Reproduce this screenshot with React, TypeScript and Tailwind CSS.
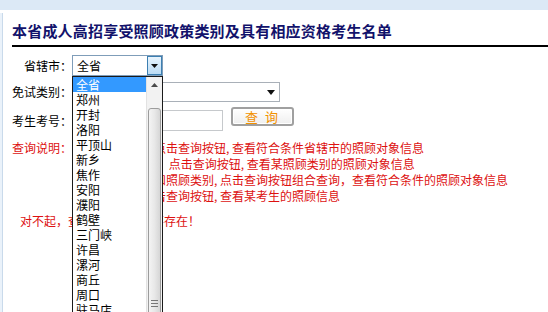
import React from "react";

const cities = [
  "全省", "郑州", "开封", "洛阳", "平顶山", "新乡", "焦作", "安阳", "濮阳", "鹤壁",
  "三门峡", "许昌", "漯河", "商丘", "周口", "驻马店", "南阳", "信阳",
];

function Dropdown() {
  return (
    <div className="absolute left-[-1px] top-[20px] z-10 flex h-[250px] w-[91px] border border-[#1a1a1a] bg-white">
      <div className="flex flex-1 flex-col overflow-hidden">
        {cities.map((c, i) => (
          <div
            key={c}
            className={
              i === 0
                ? "h-[15px] shrink-0 bg-[#3399ff] pl-[3px] text-[12px] leading-[15px] text-white"
                : "h-[15px] shrink-0 pl-[3px] text-[12px] leading-[15px] text-black"
            }
          >
            {c}
          </div>
        ))}
      </div>
      <div className="flex w-[16px] flex-col border-l border-[#e2e2e2] bg-[#f2f2f2]">
        <div className="flex h-[16px] items-center justify-center">
          <svg width="7" height="4" viewBox="0 0 7 4">
            <path d="M0 4 L3.5 0 L7 4 Z" fill="#4a4a4a" />
          </svg>
        </div>
        <div className="mx-[1px] mt-[15px] flex flex-1 flex-col justify-end rounded-t-[3px] border border-[#9c9c9c] bg-gradient-to-r from-[#f4f4f4] via-[#e8e8e8] to-[#d6d6d6] pb-[2px]">
          <div className="mb-[15px] flex flex-col items-center gap-[2px]">
            <div className="h-[1px] w-[7px] bg-[#777]" />
            <div className="h-[1px] w-[7px] bg-[#777]" />
            <div className="h-[1px] w-[7px] bg-[#777]" />
          </div>
        </div>
      </div>
    </div>
  );
}

export default function App() {
  return (
    <div
      className="relative flex h-[312px] w-[548px] flex-col overflow-hidden bg-white text-black"
      style={{ fontFamily: '"Noto Sans CJK SC", "Noto Sans", sans-serif' }}
    >
      <div className="h-[10px] shrink-0 bg-[#dce9f6]" />
      <div className="flex flex-1">
        <div className="mt-[3px] w-[3px] border-r border-[#c9daeb] bg-[#eaf2fa]" />
        <div className="flex flex-1 flex-col pl-[9px]">
          <h1 className="mt-[11px] text-[15px] font-bold leading-[20px] tracking-[0.2px] text-[#12126b]">
            本省成人高招享受照顾政策类别及具有相应资格考生名单
          </h1>
          <div className="mt-[4px] h-[2px] bg-black" />

          <div className="mt-[8px] flex h-[21px] items-center">
            <div className="w-[60px] text-right text-[12px] leading-[21px]">省辖市：</div>
            <div className="relative flex h-[21px] w-[91px] items-stretch border border-[#7f9db9] bg-white">
              <div className="flex-1 pl-[4px] text-[12px] leading-[19px]">全省</div>
              <div className="flex w-[15px] items-center justify-center border border-[#3c7fb1] bg-gradient-to-b from-[#e8f4fd] to-[#bcdcf4]">
                <svg width="7" height="4" viewBox="0 0 7 4">
                  <path d="M0 0 L7 0 L3.5 4 Z" fill="#111" />
                </svg>
              </div>
              <Dropdown />
            </div>
          </div>

          <div className="mt-[6px] flex h-[20px] items-center">
            <div className="w-[60px] text-right text-[12px] leading-[20px]">免试类别：</div>
            <div className="flex h-[20px] w-[208px] items-center justify-end border border-[#a9b0b8] bg-white pr-[4px]">
              <svg width="8" height="5" viewBox="0 0 8 5">
                <path d="M0 0 L8 0 L4 5 Z" fill="#111" />
              </svg>
            </div>
          </div>

          <div className="mt-[8px] flex h-[21px] items-start">
            <div className="w-[60px] text-right text-[12px] leading-[21px]">考生考号：</div>
            <div className="h-[21px] w-[151px] border border-[#c6c9cc] bg-white" />
            <button className="ml-[8px] mt-[-3px] flex h-[19px] w-[63px] items-center justify-center rounded-[3px] border-2 border-[#a0a0a0] bg-gradient-to-b from-white to-[#efefef] text-[13px] leading-[15px] tracking-[2px] text-[#f29100] shadow-[inset_0_0_0_1px_#ffffff]">
              查 询
            </button>
          </div>

          <div className="mt-[9px] flex text-[12px] leading-[16px] text-[#dd1111]">
            <div className="w-[60px] text-right">查询说明：</div>
            <div className="flex flex-col whitespace-nowrap">
              <div>1.选择省辖市，点击查询按钮, 查看符合条件省辖市的照顾对象信息</div>
              <div>2.选择照顾类别， 点击查询按钮, 查看某照顾类别的照顾对象信息</div>
              <div>3.同时选省辖市和照顾类别, 点击查询按钮组合查询，查看符合条件的照顾对象信息</div>
              <div>4.输入考号，点击查询按钮, 查看某考生的照顾信息</div>
            </div>
          </div>

          <div className="mt-[9px] pl-[8px] text-[12px] leading-[16px] text-[#dd1111]">
            对不起，查询的考生信息不存在！
          </div>
        </div>
      </div>
    </div>
  );
}
